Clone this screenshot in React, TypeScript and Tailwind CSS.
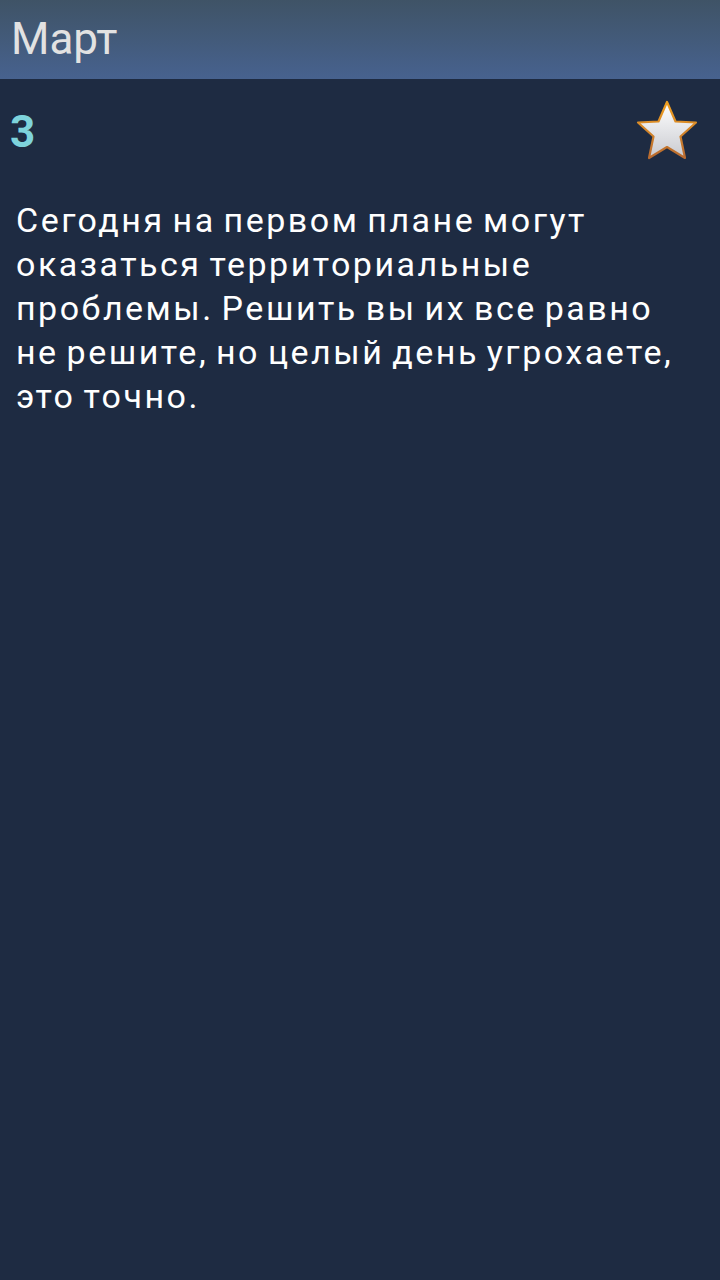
import React from 'react'

function Star() {
  return (
    <svg width="64" height="62" viewBox="0 0 64 62" className="shrink-0">
      <defs>
        <linearGradient id="starFill" x1="0" y1="0" x2="0" y2="1">
          <stop offset="0" stopColor="#ffffff" />
          <stop offset="0.5" stopColor="#e4e5e8" />
          <stop offset="1" stopColor="#c9cacf" />
        </linearGradient>
        <linearGradient id="starEdge" x1="0" y1="0" x2="0" y2="1">
          <stop offset="0" stopColor="#f0a020" />
          <stop offset="1" stopColor="#b86a30" />
        </linearGradient>
      </defs>
      <path
        d="M32 3 L40.5 22.5 L61 23.5 L45.5 37.5 L50 59 L32 48 L14 59 L18.5 37.5 L3 23.5 L23.5 22.5 Z"
        fill="url(#starFill)"
        stroke="url(#starEdge)"
        strokeWidth="2.2"
        strokeLinejoin="round"
      />
    </svg>
  )
}

export default function App() {
  return (
    <div className="min-h-[1280px] w-[720px] bg-[#1e2b42] font-['Roboto',sans-serif]">
      {/* Title bar */}
      <div className="h-[79px] bg-gradient-to-b from-[#3f5366] to-[#47628f] flex items-center px-[11px]">
        <span className="text-[44px] leading-none text-[#e2e2e2] pb-[2px]">Март</span>
      </div>

      {/* Day row */}
      <div className="flex items-start justify-between pl-[10px] pr-[21px] pt-[20px]">
        <span className="text-[44px] leading-[62px] font-bold text-[#7ed3dc] mt-[2px]">3</span>
        <Star />
      </div>

      {/* Forecast */}
      <p className="pl-[16px] pt-[35px] pr-[30px] text-[34px] leading-[44px] text-white tracking-[2.5px] [word-spacing:-3px]">
        Сегодня на первом плане могут оказаться территориальные проблемы. Решить вы их все равно не решите, но целый день угрохаете, это точно.
      </p>
    </div>
  )
}
